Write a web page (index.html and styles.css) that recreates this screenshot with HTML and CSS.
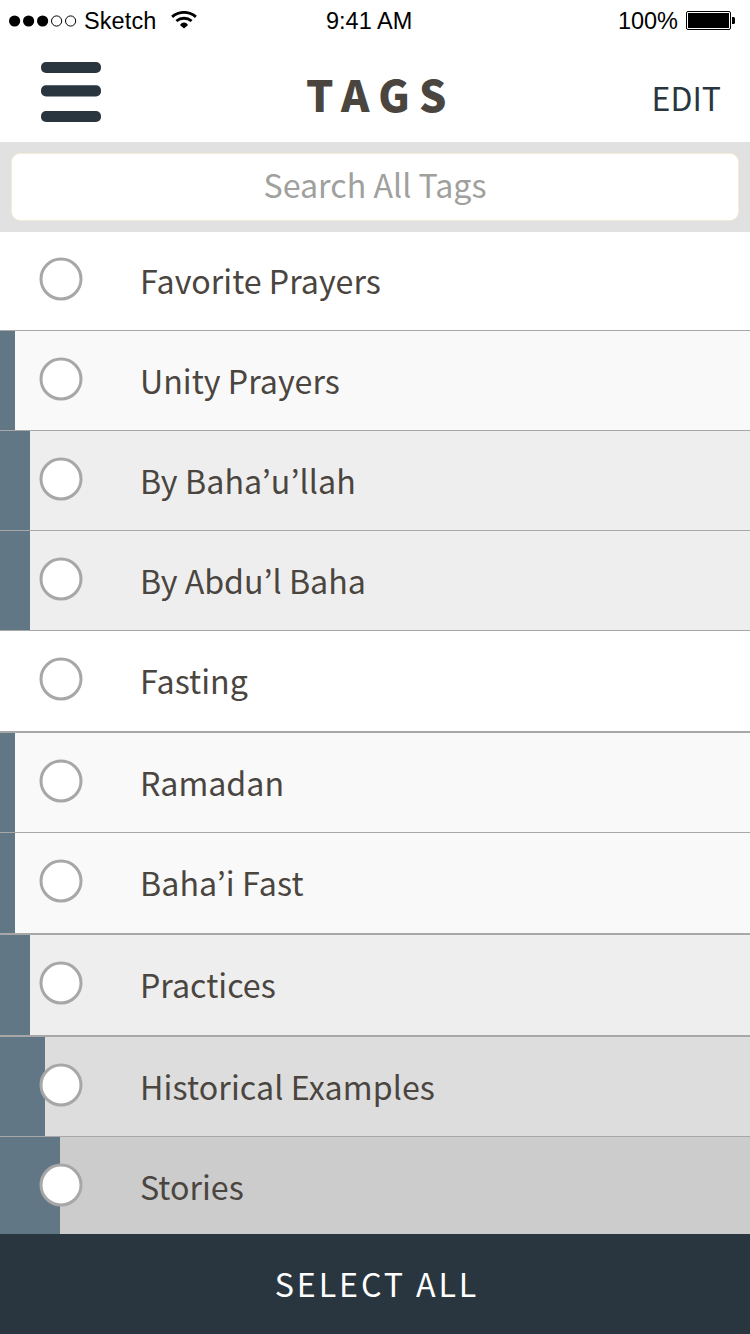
FILE: index.html
```html
<!DOCTYPE html>
<html lang="en">
<head>
<meta charset="utf-8">
<title>Tags</title>
<link rel="stylesheet" href="styles.css">
</head>
<body>
<div class="screen">
  <div class="status">
    <div class="status-left">
      <svg class="signal" width="68" height="12" viewBox="0 0 68 12">
        <circle cx="5.6" cy="6" r="5.6"/><circle cx="19.6" cy="6" r="5.6"/><circle cx="33.6" cy="6" r="5.6"/>
        <circle class="empty" cx="47.6" cy="6" r="5.1"/><circle class="empty" cx="61.6" cy="6" r="5.1"/>
      </svg>
      <span class="carrier">Sketch</span>
      <svg class="wifi" width="26" height="18" viewBox="0 0 26 18">
        <path class="arc" d="M1.1 5.8Q6.3 1.4 13 1.4T24.9 5.8"/>
        <path class="arc" d="M5.4 10Q8.7 7.3 13 7.3T20.6 10"/>
        <path d="M9 13.9Q10.6 11.5 13 11.5T17 13.9L13 17.6Z"/>
      </svg>
    </div>
    <span class="time">9:41 AM</span>
    <div class="status-right">
      <span class="percent">100%</span>
      <svg class="battery" width="49" height="19" viewBox="0 0 49 19">
        <rect class="shell" x=".5" y=".5" width="44" height="18" rx="1.5"/>
        <rect x="2" y="2" width="41" height="15"/>
        <path d="M46 6h1.5q1.5 0 1.5 1.5v4q0 1.5-1.5 1.5H46z"/>
      </svg>
    </div>
  </div>
  <header class="nav">
    <svg class="menu" width="60" height="61" viewBox="0 0 60 61">
      <rect y="0" width="60" height="11" rx="5"/><rect y="23.3" width="60" height="11.2" rx="5"/><rect y="49" width="60" height="11" rx="5"/>
    </svg>
    <h1 class="title">TAGS</h1>
    <span class="edit">EDIT</span>
  </header>
  <div class="search"><div class="field">Search All Tags</div></div>
  <ul class="list">
    <li class="row first"><svg class="radio"><circle cx="22" cy="22" r="20"/></svg><span class="label">Favorite Prayers</span></li>
    <li class="row level1"><svg class="radio"><circle cx="22" cy="22" r="20"/></svg><span class="label">Unity Prayers</span></li>
    <li class="row level2"><svg class="radio"><circle cx="22" cy="22" r="20"/></svg><span class="label loose">By Baha’u’llah</span></li>
    <li class="row level2"><svg class="radio"><circle cx="22" cy="22" r="20"/></svg><span class="label">By Abdu’l Baha</span></li>
    <li class="row thick"><svg class="radio"><circle cx="22" cy="22" r="20"/></svg><span class="label">Fasting</span></li>
    <li class="row level1"><svg class="radio"><circle cx="22" cy="22" r="20"/></svg><span class="label">Ramadan</span></li>
    <li class="row level1 thick"><svg class="radio"><circle cx="22" cy="22" r="20"/></svg><span class="label loose">Baha’i Fast</span></li>
    <li class="row level2 thick"><svg class="radio"><circle cx="22" cy="22" r="20"/></svg><span class="label">Practices</span></li>
    <li class="row level3"><svg class="radio"><circle cx="22" cy="22" r="20"/></svg><span class="label loose">Historical Examples</span></li>
    <li class="row level4 last"><svg class="radio"><circle cx="22" cy="22" r="20"/></svg><span class="label">Stories</span></li>
  </ul>
  <footer class="footer">SELECT ALL</footer>
</div>
</body>
</html>
```
FILE: styles.css
```css
* { box-sizing: border-box; }
body { margin: 0; background: #fff; }
.screen {
  width: 750px; height: 1334px; overflow: hidden;
  display: flex; flex-direction: column;
  font-family: "Noto Sans CJK KR", "Noto Sans CJK JP", sans-serif;
  font-size: 32.2px; color: #4a453f; white-space: nowrap;
}
.status {
  height: 40px; padding: 0 15px 0 9px;
  display: grid; grid-template-columns: 317px 1fr auto;
  font: 23.5px/40px "Liberation Sans", sans-serif; color: #000;
}
.status-left, .status-right { display: flex; align-items: flex-start; }
.signal { margin-top: 15px; }
.signal .empty { fill: none; stroke: #000; stroke-width: 1; }
.carrier { margin-left: 7px; width: 73px; padding-top: 1px; letter-spacing: .1px; }
.wifi { margin: 11px 0 0 14px; }
.wifi .arc { fill: none; stroke: #000; stroke-width: 2.9; }
.time { padding-top: 1px; }
.percent { padding-top: 1px; margin-right: 8px; }
.battery { margin-top: 11px; }
.battery .shell { fill: none; stroke: #000; stroke-width: 1; }
.nav {
  height: 102px; padding: 0 29px 0 41px;
  display: grid; grid-template-columns: 265px 1fr auto; align-items: start;
}
.menu { margin-top: 22px; fill: #293640; }
.title { margin: 23px 0 0; font-size: 43px; line-height: 60px; font-weight: 900; letter-spacing: 9.4px; }
.edit { margin-top: 37px; line-height: 40px; font-size: 32px; color: #293640; }
.search { height: 90px; padding: 11px; background: #e1e1e1; }
.field {
  height: 68px; border: 1px solid #f1edd4; border-radius: 9px; background: #fff;
  color: #a0a09e; text-align: center; line-height: 60px;
}
.list { margin: 0; padding: 0; list-style: none; }
.row {
  height: 100px; display: flex; align-items: flex-start; gap: 57px;
  padding: 26px 0 0 39px; border-bottom: 1px solid #a7a7a7;
}
.first { height: 99px; padding-top: 25px; }
.thick { height: 102px; border-bottom-width: 2px; }
.last { height: 97px; border-bottom: 0; }
.level1 { background: linear-gradient(90deg, #617786 15px, #f9f9f9 15px); }
.level2 { background: linear-gradient(90deg, #617786 30px, #eee 30px); }
.level3 { background: linear-gradient(90deg, #617786 45px, #ddd 45px); }
.level4 { background: linear-gradient(90deg, #617786 60px, #ccc 60px); }
.radio { width: 44px; height: 44px; flex: none; fill: #fff; stroke: #a7a7a7; stroke-width: 3; }
.label { line-height: 46px; }
.loose { letter-spacing: .1px; }
.footer {
  height: 100px; padding-left: 4px; background: #293640; color: #fff;
  text-align: center; line-height: 98px; letter-spacing: 2.9px;
}
```
